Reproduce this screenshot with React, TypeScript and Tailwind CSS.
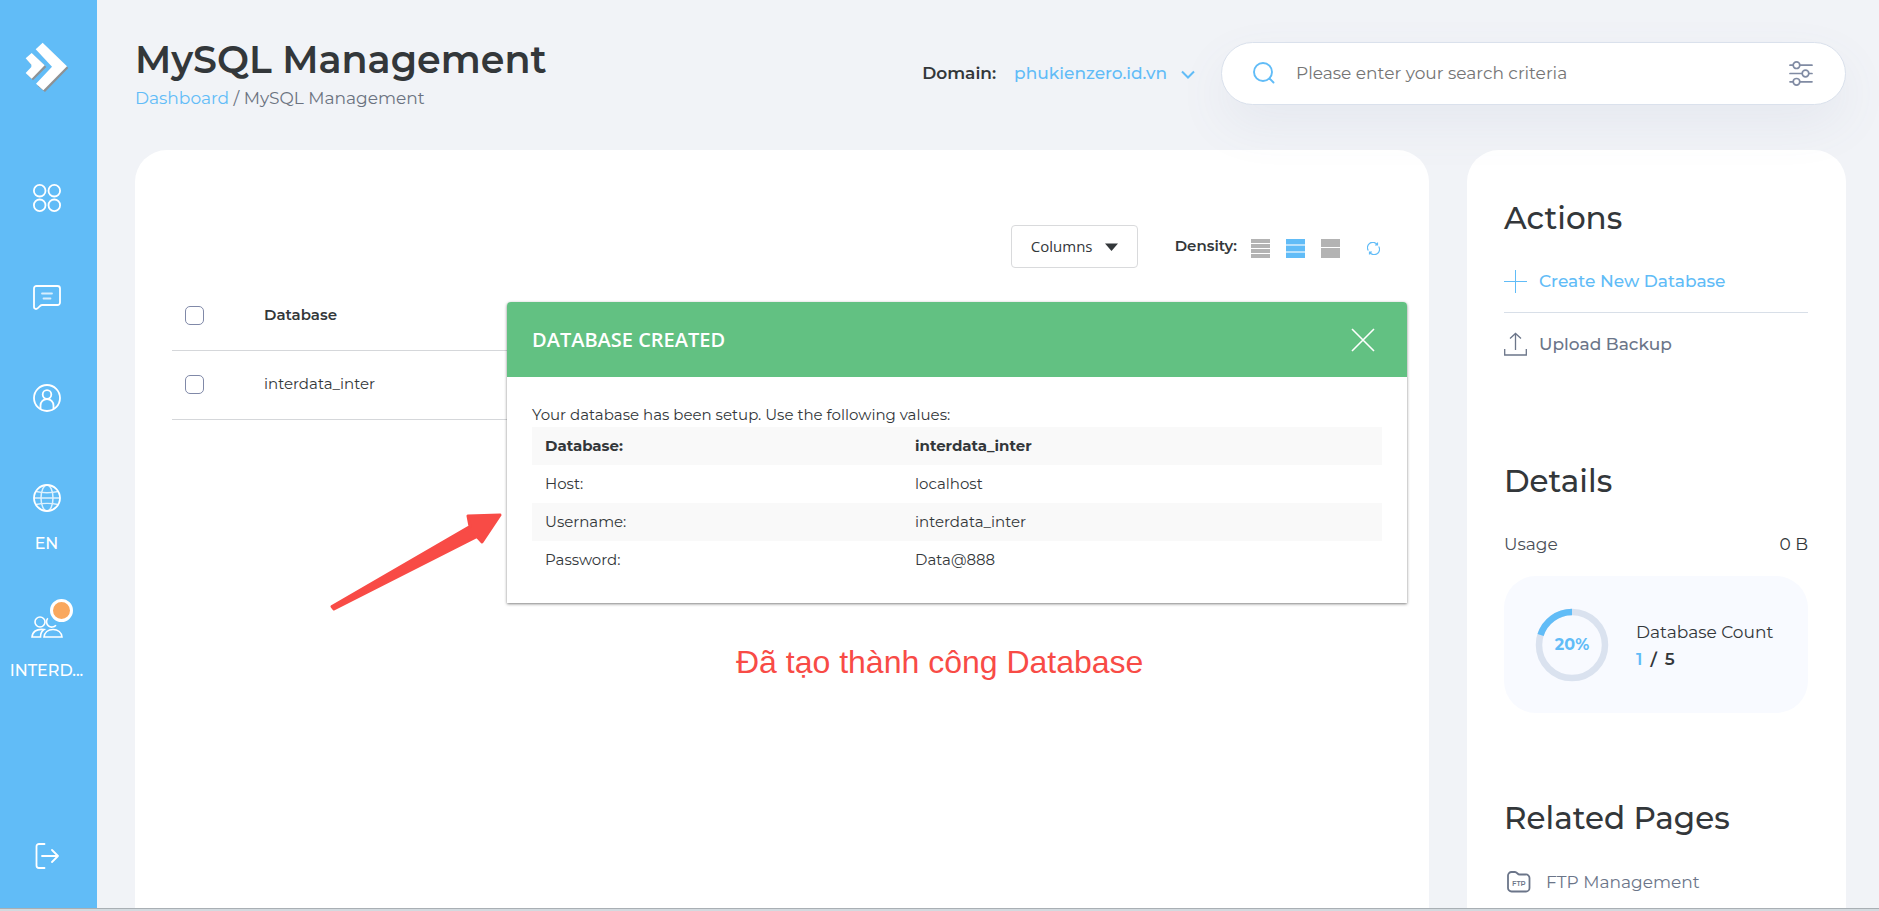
import type { ReactNode } from "react";

const databases = ["interdata_inter"];

const credentials = [
  { label: "Database:", value: "interdata_inter" },
  { label: "Host:", value: "localhost" },
  { label: "Username:", value: "interdata_inter" },
  { label: "Password:", value: "Data@888" },
];

function Logo() {
  return (
    <svg width="44" height="50" viewBox="30 35 132 150" aria-hidden="true">
      <g fill="#8f9294">
        <path d="M88 43 160 113 90 185 68 167 118 114 68 63Z" />
        <path d="M56 74 94 110 54 150 38 134 56 114 38 90Z" />
      </g>
      <g fill="#fff">
        <path d="M83 37 156 108 85 180 63 160 111 109 62 57Z" />
        <path d="M50 68 89 105 50 145 32 128 49 110 49 103 32 84Z" />
      </g>
    </svg>
  );
}

function GridIcon() {
  return (
    <svg width="28" height="28" viewBox="0 0 28 28" fill="none" stroke="currentColor" strokeWidth="1.8" aria-hidden="true">
      <circle cx="6.7" cy="6.7" r="5.8" />
      <circle cx="21.3" cy="6.7" r="5.8" />
      <circle cx="6.7" cy="21.3" r="5.8" />
      <circle cx="21.3" cy="21.3" r="5.8" />
    </svg>
  );
}

function ChatIcon() {
  return (
    <svg width="28" height="28" viewBox="0 0 28 28" fill="none" stroke="currentColor" strokeWidth="1.8" strokeLinecap="round" strokeLinejoin="round" aria-hidden="true">
      <path d="M3.500 2h21A2.500 2.500 0 0 1 27 4.500v14a2.500 2.500 0 0 1-2.500 2.500H9c-2.500 0-3.500 4-6 4-1.300 0-2-.7-2-2V4.500A2.500 2.500 0 0 1 3.500 2Z" />
      <path d="M9 9.500h10M10.500 14.500h7" opacity=".75" />
    </svg>
  );
}

function UserIcon() {
  return (
    <svg width="28" height="28" viewBox="0 0 28 28" fill="none" stroke="currentColor" strokeWidth="1.8" aria-hidden="true">
      <circle cx="14" cy="14" r="13" />
      <circle cx="14" cy="10.500" r="4.300" />
      <path d="M7.500 25v-3.500a6.500 6.500 0 0 1 13 0V25" />
    </svg>
  );
}

function GlobeIcon() {
  return (
    <svg width="28" height="28" viewBox="0 0 28 28" fill="none" stroke="currentColor" aria-hidden="true">
      <circle cx="14" cy="14" r="13" strokeWidth="1.800" />
      <g strokeWidth="1.500" opacity=".8">
        <ellipse cx="14" cy="14" rx="6" ry="13" />
        <path d="M1 14h26M3 7.500c6 1.500 16 1.500 22 0M3 20.500c6-1.500 16-1.500 22 0" />
      </g>
    </svg>
  );
}

function PeopleIcon() {
  return (
    <svg width="32" height="24" viewBox="0 0 32 24" fill="none" stroke="currentColor" strokeWidth="1.600" aria-hidden="true">
      <circle cx="9" cy="7" r="5" />
      <path d="M16.800 3.200A5 5 0 1 0 25 10.200" />
      <path d="M13 14.500C5 13.500 1.500 17 1 22h8.500c0-3 1.200-6 3.500-7.500ZM13 22c.5-4.500 4-7.500 9-7.500s8.500 3 9 7.500Z" />
    </svg>
  );
}

function LogoutIcon() {
  return (
    <svg width="24" height="26" viewBox="0 0 24 26" fill="none" stroke="currentColor" strokeWidth="1.800" strokeLinecap="round" strokeLinejoin="round" aria-hidden="true">
      <path d="M9.500 1H4a2.500 2.500 0 0 0-2.500 2.500v19A2.500 2.500 0 0 0 4 25h5.500M7 13h16M17 7l6 6-6 6" />
    </svg>
  );
}

function NavButton({ label, className, children }: { label: string; className: string; children: ReactNode }) {
  return (
    <button type="button" aria-label={label} className={`flex w-full flex-col items-center justify-center ${className}`}>
      {children}
    </button>
  );
}

function Sidebar() {
  return (
    <nav className="flex w-[97px] shrink-0 flex-col items-center bg-[#61bcf7] pr-1 pt-[42px] text-base font-medium text-white">
      <a href="#" aria-label="Home" className="mb-[56px]">
        <Logo />
      </a>
      <NavButton label="Dashboard" className="h-[100px]"><GridIcon /></NavButton>
      <NavButton label="Messages" className="h-[100px]"><ChatIcon /></NavButton>
      <NavButton label="Profile" className="h-[100px]"><UserIcon /></NavButton>
      <NavButton label="Language" className="h-[144px] gap-[20px]">
        <GlobeIcon />
        EN
      </NavButton>
      <NavButton label="Account" className="mt-[2px] h-[110px] gap-[20px]">
        <span className="relative">
          <PeopleIcon />
          <span className="absolute -top-4 left-[19px] size-[23px] rounded-full border-[3px] border-white bg-[#f9a85f]" />
        </span>
        INTERD...
      </NavButton>
      <NavButton label="Log out" className="mb-[26px] mt-auto h-[52px]"><LogoutIcon /></NavButton>
    </nav>
  );
}

function Header() {
  return (
    <header className="flex items-center justify-between pb-[40px] pt-[36px]">
      <div>
        <h1 className="text-[38px] font-semibold leading-[48px]">MySQL Management</h1>
        <p className="mt-[2px] text-[17px] leading-[24px] text-[#6b7280]">
          <a href="#" className="text-[#61bcf7]">Dashboard</a> / MySQL Management
        </p>
      </div>
      <div className="flex items-center text-[17px]">
        <span className="pt-[2px] font-semibold">Domain:</span>
        <button type="button" className="ml-[18px] mr-[26px] flex items-center gap-[14px] pt-[2px] font-medium text-[#61bcf7]">
          phukienzero.id.vn
          <svg width="14" height="9" viewBox="0 0 14 9" fill="none" stroke="currentColor" strokeWidth="2" aria-hidden="true">
            <path d="M1 1.500 7 7.500 13 1.500" />
          </svg>
        </button>
        <label className="relative z-10 flex h-[63px] w-[625px] items-center rounded-full border border-[#dae1ec] bg-white pl-[31px] pr-[32px] shadow-[0_20px_50px_rgba(100,110,150,0.08)]">
          <svg width="22" height="22" viewBox="0 0 22 22" fill="none" stroke="#61bcf7" strokeWidth="1.900" strokeLinecap="round" aria-hidden="true">
            <circle cx="10" cy="10" r="9" />
            <path d="m16.500 16.500 4 4" />
          </svg>
          <input
            type="text"
            aria-label="Search"
            placeholder="Please enter your search criteria"
            className="ml-[21px] min-w-0 flex-1 pt-[2px] outline-none placeholder:text-[#757575]"
          />
          <button type="button" aria-label="Search filters" className="text-[#808ba3]">
            <svg width="24" height="25" viewBox="0 0 24 25" fill="none" stroke="currentColor" strokeWidth="1.700" strokeLinecap="round" aria-hidden="true">
              <path d="M1 4.200h3M11 4.200h12M1 12.500h12M20 12.500h3M1 20.800h3M11 20.800h12" />
              <circle cx="7.500" cy="4.200" r="3.300" />
              <circle cx="16.500" cy="12.500" r="3.300" />
              <circle cx="7.500" cy="20.800" r="3.300" />
            </svg>
          </button>
        </label>
      </div>
    </header>
  );
}

function Toolbar() {
  return (
    <div className="flex items-center justify-end pr-[12px]">
      <button type="button" className="flex h-[43px] w-[127px] items-center justify-center gap-3 rounded border border-[#d9dadc] font-['Open_Sans',sans-serif] text-[15px]">
        Columns
        <svg width="13" height="8" viewBox="0 0 13 8" fill="#33373a" aria-hidden="true">
          <path d="M0 .5h13L6.500 8Z" />
        </svg>
      </button>
      <span className="ml-[37px] text-[15px] font-semibold">Density:</span>
      <div className="ml-[14px] mt-1 flex gap-4">
        <button type="button" aria-label="Compact" className="flex size-[19px] flex-col justify-between">
          {Array.from({ length: 4 }).map((_, i) => (
            <span key={i} className="h-[4px] w-full bg-[#b3b3b3]" />
          ))}
        </button>
        <button type="button" aria-label="Default" aria-pressed="true" className="flex size-[19px] flex-col justify-between bg-[#b9e1fb]">
          {Array.from({ length: 3 }).map((_, i) => (
            <span key={i} className="h-[5px] w-full bg-[#61bcf7]" />
          ))}
        </button>
        <button type="button" aria-label="Comfortable" className="flex size-[19px] flex-col justify-between">
          <span className="h-[8px] w-full bg-[#b3b3b3]" />
          <span className="h-[10px] w-full bg-[#b3b3b3]" />
        </button>
      </div>
      <button type="button" aria-label="Refresh" className="ml-[27px] mt-1 text-[#61bcf7]">
        <svg width="13" height="13" viewBox="0 0 13 13" fill="none" stroke="currentColor" strokeWidth="1.200" aria-hidden="true">
          <path d="M1.300 8.500A5.300 5.300 0 0 1 10.200 2.700M11.700 4.500A5.300 5.300 0 0 1 2.800 10.300M8 3h2.500V.5M5 10H2.500v2.500" />
        </svg>
      </button>
    </div>
  );
}

function DatabaseTable() {
  const checkbox = "block size-[19px] appearance-none rounded-[5px] border border-[#8089a8] bg-white";

  return (
    <table className="mt-[13px] w-full border-collapse text-left text-[15px]">
      <thead>
        <tr className="h-[69px] border-b border-[#d5d7da]">
          <th className="w-[92px] pl-[13px]">
            <input type="checkbox" aria-label="Select all" className={checkbox} />
          </th>
          <th className="font-semibold">Database</th>
        </tr>
      </thead>
      <tbody>
        {databases.map((name) => (
          <tr key={name} className="h-[69px] border-b border-[#d5d7da]">
            <td className="pl-[13px]">
              <input type="checkbox" aria-label={name} className={checkbox} />
            </td>
            <td>{name}</td>
          </tr>
        ))}
      </tbody>
    </table>
  );
}

function CreatedDialog() {
  return (
    <div role="dialog" aria-labelledby="created-title" className="absolute left-[372px] right-[22px] top-[152px] rounded-t bg-white shadow-[0_1px_3px_rgba(0,0,0,0.5)]">
      <div className="flex h-[75px] items-center justify-between rounded-t bg-[#62c182] pl-[25px] pr-[32px] text-white">
        <h2 id="created-title" className="font-['Open_Sans',sans-serif] text-[20px] font-semibold">DATABASE CREATED</h2>
        <button type="button" aria-label="Close">
          <svg width="24" height="24" viewBox="0 0 24 24" stroke="currentColor" strokeWidth="1.600" aria-hidden="true">
            <path d="m1 1 22 22M23 1 1 23" />
          </svg>
        </button>
      </div>
      <div className="px-[25px] pb-[24px] pt-[26px] text-[15px] leading-[24px]">
        <p>Your database has been setup. Use the following values:</p>
        <table className="w-full table-fixed text-left">
          <tbody>
            {credentials.map(({ label, value }, i) => (
              <tr key={label} className={`h-[38px] odd:bg-[#f9f9f9] ${i === 0 ? "font-bold" : "font-normal"}`}>
                <th scope="row" className={`w-[370px] pl-[13px] ${i === 0 ? "font-bold" : "font-normal"}`}>{label}</th>
                <td className="pl-[13px]">{value}</td>
              </tr>
            ))}
          </tbody>
        </table>
      </div>
    </div>
  );
}

function CountCard({ used, total }: { used: number; total: number }) {
  const circumference = 2 * Math.PI * 33;

  return (
    <div className="mt-[20px] flex h-[137px] items-center gap-[27px] rounded-[32px] bg-[#f8faff] px-[31px]">
      <div className="relative flex size-[74px] shrink-0 items-center justify-center">
        <svg className="absolute inset-0" viewBox="0 0 74 74" fill="none" strokeWidth="6.500" aria-hidden="true">
          <circle cx="37" cy="37" r="33" stroke="#dae2ef" />
          <circle
            cx="37"
            cy="37"
            r="33"
            stroke="#61bcf7"
            strokeDasharray={`${(circumference * used) / total} ${circumference}`}
            transform="translate(74 0) scale(-1 1) rotate(-90 37 37)"
          />
        </svg>
        <span className="text-base font-bold text-[#61bcf7]">{(used / total) * 100}%</span>
      </div>
      <div className="whitespace-nowrap pt-[2px] text-[17px] leading-[27px]">
        <p>Database Count</p>
        <p className="flex gap-2 font-semibold">
          <span className="text-[#61bcf7]">{used}</span>
          <span>/</span>
          <span>{total}</span>
        </p>
      </div>
    </div>
  );
}

function SidePanel() {
  return (
    <aside className="w-[379px] shrink-0 rounded-t-[32px] bg-white pl-[37px] pr-[38px] pt-[50px] text-[17px] leading-[24px]">
      <h2 className="text-[31px] font-medium leading-[36px]">Actions</h2>
      <ul className="mt-[14px] font-medium">
        <li className="border-b border-[#d8dfe8]">
          <a href="#" className="flex h-[62px] items-center gap-3 text-[#61bcf7]">
            <svg width="23" height="23" viewBox="0 0 23 23" stroke="currentColor" aria-hidden="true">
              <path d="M11.500 0v23M0 11.500h23" />
            </svg>
            Create New Database
          </a>
        </li>
        <li>
          <a href="#" className="flex h-[62px] items-center gap-3 text-[#6b7589]">
            <svg width="23" height="24" viewBox="0 0 23 24" fill="none" stroke="currentColor" strokeWidth="1.300" aria-hidden="true">
              <path d="M11.500 18V1.500M6 6.500l5.500-5 5.500 5M.7 17v6h21.600v-6" />
            </svg>
            Upload Backup
          </a>
        </li>
      </ul>

      <h2 className="mt-[88px] text-[31px] font-medium leading-[36px]">Details</h2>
      <div className="mt-[33px] flex justify-between">
        <span className="text-[#4b5058]">Usage</span>
        <span>0 B</span>
      </div>
      <CountCard used={1} total={5} />

      <h2 className="mt-[87px] text-[31px] font-medium leading-[36px]">Related Pages</h2>
      <a href="#" className="mt-[14px] flex h-[63px] items-center gap-[15px] pl-[3px] text-[#6b7589]">
        <svg width="24" height="22" viewBox="0 0 24 22" fill="none" stroke="currentColor" strokeWidth="1.800" strokeLinejoin="round" aria-hidden="true">
          <path d="M1 17V4.500A3.500 3.500 0 0 1 4.500 1H8c2 0 2.500 2.500 4.500 2.500h6A3.500 3.500 0 0 1 22.500 7v10a3.500 3.500 0 0 1-3.500 3.500H4.500A3.500 3.500 0 0 1 1 17Z" />
          <text x="11.800" y="14.500" textAnchor="middle" fill="currentColor" stroke="none" fontSize="7" fontWeight="600">FTP</text>
        </svg>
        FTP Management
      </a>
    </aside>
  );
}

export default function App() {
  return (
    <div className="flex h-screen flex-col overflow-hidden bg-[#f1f3f7] font-['Montserrat','Inter',sans-serif] text-[#33373a]">
      <div className="flex min-h-0 flex-1">
        <Sidebar />
        <div className="flex min-w-0 flex-1 flex-col pl-[38px] pr-[33px]">
          <Header />
          <div className="flex min-h-0 flex-1 gap-[38px]">
            <main className="relative min-w-0 flex-1 rounded-t-[32px] bg-white px-[37px] pt-[75px]">
              <Toolbar />
              <DatabaseTable />
              <CreatedDialog />

              {/* Callout */}
              <svg className="absolute left-[194px] top-[362px]" width="174" height="100" viewBox="0 0 174 100" fill="#f84b46" stroke="#f84b46" strokeWidth="3" strokeLinejoin="round" aria-hidden="true">
                <path d="M3 94.500 141 14.500 139 4 171 3 153 30 148 24.500 5 97Z" />
              </svg>
              <p className="absolute left-[601px] top-[494px] whitespace-nowrap font-['Liberation_Sans',sans-serif] text-[32px] leading-[36px] text-[#f84b46]">
                Đã tạo thành công Database
              </p>
            </main>
            <SidePanel />
          </div>
        </div>
      </div>
      <div className="h-[3px] shrink-0 border-t border-[#a9afb4] bg-[#d3dadf]" />
    </div>
  );
}
